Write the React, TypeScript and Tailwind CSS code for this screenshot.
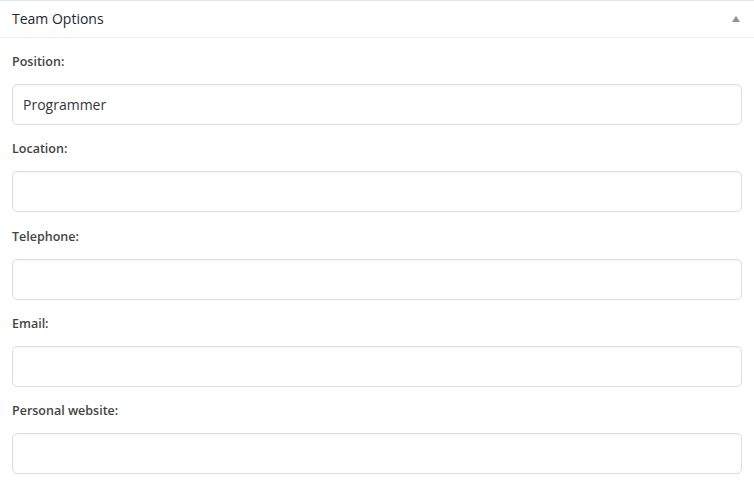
const fields = [
  { label: 'Position:', value: 'Programmer' },
  { label: 'Location:', value: '' },
  { label: 'Telephone:', value: '' },
  { label: 'Email:', value: '' },
  { label: 'Personal website:', value: '' },
]

export default function App() {
  return (
    <div className="w-[754px] h-[485px] bg-white font-['Open_Sans',sans-serif] text-[#23282d]">
      <div className="border-t border-[#e5e5e5]">
        {/* Header */}
        <div className="h-[37px] flex items-center justify-between pl-3 pr-[14px] border-b border-[#eeeeee]">
          <h2 className="text-[14px] leading-none">Team Options</h2>
          <svg width="8" height="6" viewBox="0 0 8 6" className="mb-[1px]">
            <path d="M4 0 L8 6 L0 6 Z" fill="#8c9296" />
          </svg>
        </div>

        {/* Fields */}
        <div className="pl-3 pr-3 pt-[15px]">
          {fields.map((f) => (
            <div key={f.label} className="mb-[15.25px]">
              <label className="block text-[12.5px] font-semibold text-[#444] leading-[18px] mb-[13px]">
                {f.label}
              </label>
              <input
                type="text"
                defaultValue={f.value}
                className="block w-[730px] h-[41px] px-[10px] rounded-[5px] border border-[#dddddd] text-[14px] text-[#32373c] outline-none shadow-[inset_0_1px_2px_rgba(0,0,0,0.04)]"
              />
            </div>
          ))}
        </div>
      </div>
    </div>
  )
}
